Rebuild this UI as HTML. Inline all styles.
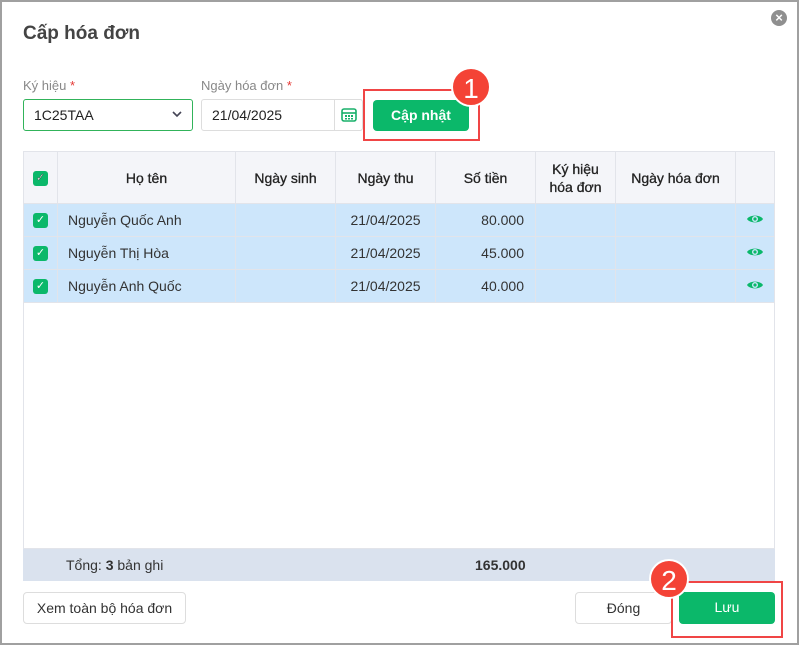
<!DOCTYPE html>
<html><head><meta charset="utf-8"><style>
*{box-sizing:border-box;margin:0;padding:0}
body{width:799px;height:645px;background:#fff;font-family:"Liberation Sans",sans-serif;position:relative;overflow:hidden;color:#333}
.frame{position:absolute;left:0;top:0;width:799px;height:645px;border:2px solid #a0a0a0}
.a{position:absolute}
h1{position:absolute;left:23px;top:23px;font-size:19px;font-weight:bold;color:#444}
.lbl{font-size:13px;color:#888}
.lbl b{color:#e53935;font-weight:normal}
.inp{border:1px solid #ddd;border-radius:3px;font-size:14px;color:#222;padding-left:10px;line-height:30px}
.btn{border-radius:4px;font-size:14px;text-align:center;line-height:31px}
.g{background:#0bb86a;color:#fff;font-weight:bold}
.w{background:#fff;border:1px solid #ddd;color:#333}
table{border-collapse:collapse;position:absolute;left:23px;top:151px;width:752px;font-size:14px}
td,th{border:1px solid #e2e4ea;height:33px}
th{background:#f4f5f9;height:52px;font-weight:normal;color:#222;font-size:14px;-webkit-text-stroke:0.3px #222}
tr.r td{background:#cde6fb}
.cb{display:inline-block;width:15px;height:15px;background:#0bb86a;border-radius:3px;color:#fff;font-size:11px;line-height:15px;text-align:center;vertical-align:middle}
.badge{width:40px;height:40px;border-radius:50%;background:#f44336;color:#fff;font-size:28px;text-align:center;line-height:40px;border:2px solid #fff}
.red{border:2px solid #f04545}
</style></head><body>
<div class="frame"></div>
<h1>Cấp hóa đơn</h1>
<div class="a" style="left:771px;top:10px;width:16px;height:16px;border-radius:50%;background:#8f8f8f;color:#fff;font-size:13px;line-height:16px;text-align:center;font-weight:bold">×</div>
<div class="a lbl" style="left:23px;top:78px">Ký hiệu <b>*</b></div>
<div class="a lbl" style="left:201px;top:78px">Ngày hóa đơn <b>*</b></div>
<div class="a inp" style="left:23px;top:99px;width:170px;height:32px;border-color:#31b35a">1C25TAA</div>
<svg class="a" style="left:172px;top:111px" width="10" height="7"><path d="M1 1l4 4 4-4" stroke="#445" stroke-width="1.6" fill="none"/></svg>
<div class="a inp" style="left:201px;top:99px;width:162px;height:32px">21/04/2025</div>
<div class="a" style="left:334px;top:100px;width:1px;height:30px;background:#ddd"></div>
<svg class="a" style="left:341px;top:107px" width="16" height="15"><rect x="1" y="2" width="14" height="12" rx="2" fill="none" stroke="#18b06a" stroke-width="1.6"/><line x1="1" y1="6" x2="15" y2="6" stroke="#18b06a" stroke-width="1.6"/><rect x="4" y="8" width="2" height="2" fill="#18b06a"/><rect x="7" y="8" width="2" height="2" fill="#18b06a"/><rect x="10" y="8" width="2" height="2" fill="#18b06a"/><rect x="4" y="11" width="2" height="1.5" fill="#18b06a"/><rect x="7" y="11" width="2" height="1.5" fill="#18b06a"/><rect x="10" y="11" width="2" height="1.5" fill="#18b06a"/></svg>
<div class="a btn g" style="left:373px;top:100px;width:96px;height:31px">Cập nhật</div>
<div class="a red" style="left:363px;top:89px;width:117px;height:52px"></div>
<div class="a badge" style="left:451px;top:67px">1</div>
<table>
<tr><th style="width:34px"><span class="cb">✓</span></th><th style="width:178px">Họ tên</th><th style="width:100px">Ngày sinh</th><th style="width:100px">Ngày thu</th><th style="width:100px">Số tiền</th><th style="width:80px;line-height:18px">Ký hiệu<br>hóa đơn</th><th style="width:120px">Ngày hóa đơn</th><th></th></tr>
<tr class="r"><td align="center"><span class="cb">✓</span></td><td style="padding-left:10px">Nguyễn Quốc Anh</td><td></td><td align="center">21/04/2025</td><td align="right" style="padding-right:11px">80.000</td><td></td><td></td><td align="center"><svg width="18" height="12" viewBox="0 0 18 12"><path d="M1 6C3.5 1.5 14.5 1.5 17 6C14.5 10.5 3.5 10.5 1 6Z" fill="#0bb86a"/><circle cx="9" cy="6" r="3" fill="#cde6fb"/><circle cx="9" cy="6" r="1.6" fill="#0bb86a"/></svg></td></tr>
<tr class="r"><td align="center"><span class="cb">✓</span></td><td style="padding-left:10px">Nguyễn Thị Hòa</td><td></td><td align="center">21/04/2025</td><td align="right" style="padding-right:11px">45.000</td><td></td><td></td><td align="center"><svg width="18" height="12" viewBox="0 0 18 12"><path d="M1 6C3.5 1.5 14.5 1.5 17 6C14.5 10.5 3.5 10.5 1 6Z" fill="#0bb86a"/><circle cx="9" cy="6" r="3" fill="#cde6fb"/><circle cx="9" cy="6" r="1.6" fill="#0bb86a"/></svg></td></tr>
<tr class="r"><td align="center"><span class="cb">✓</span></td><td style="padding-left:10px">Nguyễn Anh Quốc</td><td></td><td align="center">21/04/2025</td><td align="right" style="padding-right:11px">40.000</td><td></td><td></td><td align="center"><svg width="18" height="12" viewBox="0 0 18 12"><path d="M1 6C3.5 1.5 14.5 1.5 17 6C14.5 10.5 3.5 10.5 1 6Z" fill="#0bb86a"/><circle cx="9" cy="6" r="3" fill="#cde6fb"/><circle cx="9" cy="6" r="1.6" fill="#0bb86a"/></svg></td></tr>
</table>
<div class="a" style="left:23px;top:302px;width:752px;height:247px;border:1px solid #e2e4ea;border-top:none"></div>
<div class="a" style="left:23px;top:549px;width:752px;height:32px;background:#dae2ee;font-size:14px;line-height:32px">
<span class="a" style="left:43px">Tổng: <b>3</b> bản ghi</span><span class="a" style="left:452px;font-weight:bold">165.000</span></div>
<div class="a btn w" style="left:23px;top:592px;width:163px;height:32px">Xem toàn bộ hóa đơn</div>
<div class="a btn w" style="left:575px;top:592px;width:97px;height:32px">Đóng</div>
<div class="a btn g" style="left:679px;top:592px;width:96px;height:32px;font-weight:normal">Lưu</div>
<div class="a red" style="left:671px;top:581px;width:112px;height:57px"></div>
<div class="a badge" style="left:649px;top:559px">2</div>
</body></html>
